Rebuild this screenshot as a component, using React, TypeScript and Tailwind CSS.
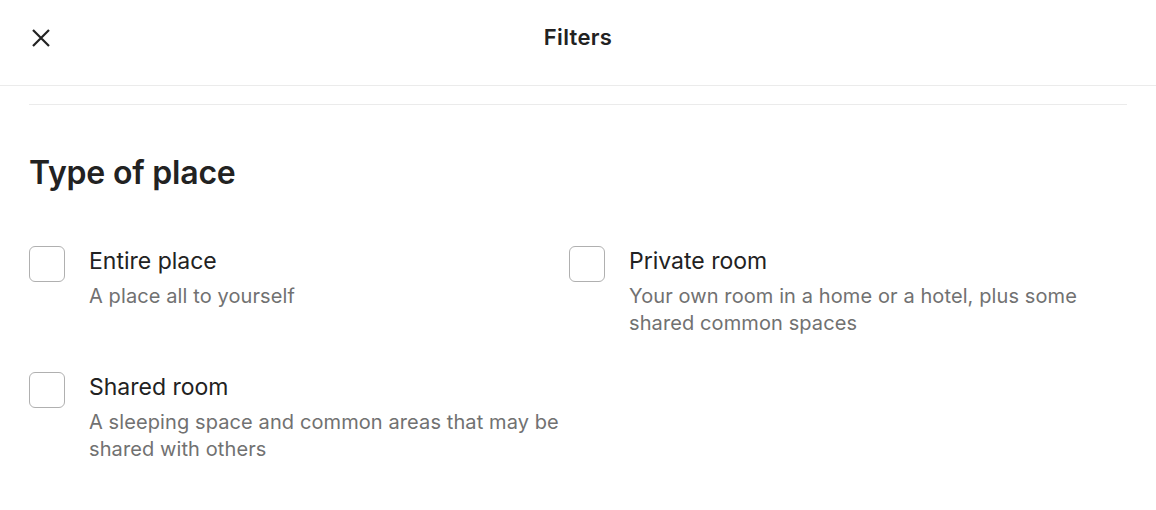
import React from "react";

const options = [
  { title: "Entire place", desc: "A place all to yourself" },
  { title: "Private room", desc: "Your own room in a home or a hotel, plus some shared common spaces" },
  { title: "Shared room", desc: "A sleeping space and common areas that may be shared with others" },
];

const Option = ({ title, desc }: { title: string; desc: string }) => (
  <label className="flex items-start gap-6 cursor-pointer">
    <span className="h-9 w-9 shrink-0 rounded-[6px] border border-[#b0b0b0] bg-white" />
    <span className="mt-px flex flex-col">
      <span className="text-[23px] leading-[28px] text-[#222222]">{title}</span>
      <span className="mt-[8px] text-[20px] leading-[27px] tracking-[0.1px] text-[#717171]">{desc}</span>
    </span>
  </label>
);

const App: React.FC = () => {
  return (
    <div className="h-[510px] w-full overflow-hidden bg-white" style={{ fontFamily: "Inter, 'Noto Sans', sans-serif" }}>
      <header className="relative flex h-[86px] items-center justify-center border-b border-[#ebebeb]">
        <button className="absolute left-[28px] top-[25px] flex h-[25px] w-[25px] items-center justify-center text-[#222222]">
          <svg width="18" height="18" viewBox="0 0 18 18" fill="none" stroke="currentColor" strokeWidth="2.2">
            <path d="M1 1 L17 17 M17 1 L1 17" />
          </svg>
        </button>
        <h1 className="-mt-[11px] text-[22px] font-semibold tracking-[0.3px] text-[#222222]">Filters</h1>
      </header>
      <div className="px-[29px] pt-[18px]">
        <div className="border-t border-[#ebebeb] pt-[48px]">
          <h2 className="text-[32px] leading-[40px] font-semibold tracking-[-0.2px] text-[#222222]">Type of place</h2>
          <div className="mt-[53px] grid grid-cols-[540px_1fr] gap-y-[35px]">
            {options.map((o) => (
              <Option key={o.title} title={o.title} desc={o.desc} />
            ))}
          </div>
        </div>
      </div>
    </div>
  );
};

export default App;
